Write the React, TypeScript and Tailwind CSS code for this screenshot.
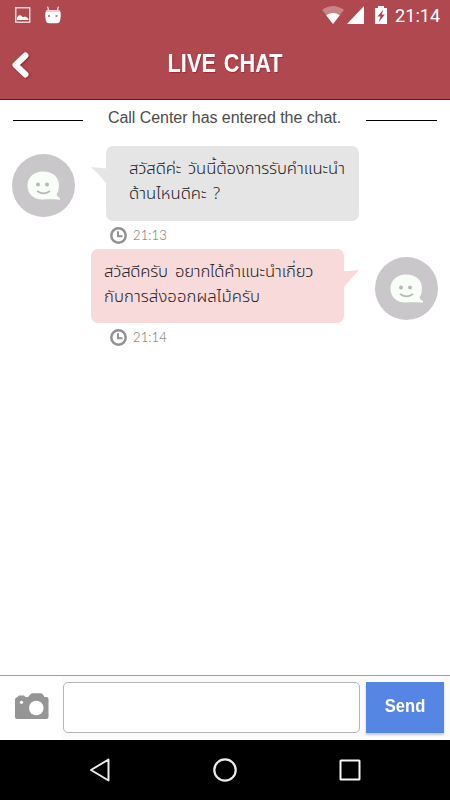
import type { ReactNode } from "react";

type Message = {
  id: number;
  side: "left" | "right";
  lines: { text: string; className: string }[];
  time: string;
};

const messages: Message[] = [
  {
    id: 1,
    side: "left",
    lines: [
      { text: "สวัสดีค่ะ วันนี้ต้องการรับคำแนะนำ", className: "tracking-[-0.110px] [word-spacing:2.500px]" },
      { text: "ด้านไหนดีคะ ?", className: "[word-spacing:2px]" },
    ],
    time: "21:13",
  },
  {
    id: 2,
    side: "right",
    lines: [
      { text: "สวัสดีครับ อยากได้คำแนะนำเกี่ยว", className: "tracking-[-0.220px] [word-spacing:3px]" },
      { text: "กับการส่งออกผลไม้ครับ", className: "tracking-[0.080px]" },
    ],
    time: "21:14",
  },
];

function StatusBar() {
  return (
    <div className="flex h-[30px] items-center text-white">
      {/* Notifications */}
      <svg className="ml-[15px] h-4 w-4" viewBox="0 0 16 16" fill="none">
        <rect x="0.75" y="0.75" width="14" height="14.5" stroke="#f5dfe1" strokeWidth="1.4" />
        <path d="M2 13V10.5L4 8.3L6 8.5L8 10.2L10 9.4L12 10.3L13.5 12V13Z" fill="#fff" />
      </svg>
      <svg className="ml-[14px] h-[18px] w-4" viewBox="0 0 16 18">
        <path d="M3.5 4.5L2.8 1M12.5 4.5L13.2 1" stroke="#fff" strokeWidth="1.1" strokeLinecap="round" />
        <path d="M0.5 6Q1 4 3 4H13Q15 4 15.5 6Q16.2 10 15 15Q14.5 17.3 12 17.3H4Q1.500 17.3 1 15Q-0.200 10 0.5 6Z" fill="#fff" />
        <path d="M1 6Q1.500 4 3 4H13Q14.500 4 15 6Z" fill="#e9cbce" />
        <rect x="3" y="9" width="2" height="2" fill="#c77c83" />
        <rect x="10.500" y="9" width="2" height="2" fill="#c77c83" />
      </svg>

      {/* Connectivity */}
      <svg className="ml-auto h-[18px] w-[22px]" viewBox="0 0 22 18">
        <path d="M11 18L0 3.800Q11 -3.800 22 3.800Z" fill="#c98389" />
        <path d="M11 18L4.200 9.200Q11 4.800 17.800 9.200Z" fill="#fff" />
      </svg>
      <svg className="ml-[3px] h-[18px] w-[17px]" viewBox="0 0 17 18">
        <path d="M17 0V18H0Z" fill="#fff" />
      </svg>
      <svg className="ml-[11px] h-[18px] w-3" viewBox="0 0 12 18">
        <path d="M0 2H3V0H9V2H12V18H0Z" fill="#fff" />
        <path d="M8.500 3.500L2.300 10.500H5.500L3.800 16L9.900 8.500H6.700Z" fill="#b0484f" />
      </svg>
      <span className="ml-2 mr-[10px] w-[45px] whitespace-nowrap pt-0.5 font-[Roboto] text-[18.2px] leading-none">21:14</span>
    </div>
  );
}

function Header() {
  return (
    <header className="h-[100px] border-b border-[#9e0308] bg-[#b0484f]">
      <StatusBar />
      <div className="grid h-[69px] grid-cols-[1fr_auto_1fr] items-center">
        <svg className="ml-[11px] h-[28px] w-5 drop-shadow-[1px_1px_1px_rgba(120,20,30,0.6)]" viewBox="0 0 20 28" fill="none">
          <path d="M14.500 4.500L4.500 14L14.500 23.500" stroke="#fff" strokeWidth="6" strokeLinecap="round" strokeLinejoin="round" />
        </svg>
        <h1 className="origin-center scale-x-[0.870] whitespace-nowrap pb-0.5 font-['Liberation_Sans'] text-[25px] font-bold leading-none text-white [text-shadow:1px_1px_1px_#9c2a34] [word-spacing:2px]">
          LIVE CHAT
        </h1>
      </div>
    </header>
  );
}

function Avatar({ className }: { className: string }) {
  return (
    <div className={`h-[63px] w-[63px] shrink-0 rounded-full bg-[#cac7ca] ${className}`}>
      <svg className="h-full w-full" viewBox="0 0 63 63" fill="none">
        <path
          d="M31 17.500C21 17.500 15.500 24 15.500 31.500C15.500 40 21.500 45.800 31 45.500C34 45 42 45.300 48 45.700V44Q45.500 43.300 44.500 40.500Q47 37 47 31.500C47 23 41 17.500 31 17.500Z"
          fill="#f8fdf8"
        />
        <circle cx="26" cy="30.500" r="2" fill="#b9b8b9" />
        <circle cx="35" cy="30.500" r="2" fill="#b9b8b9" />
        <path d="M25.500 37.300Q31.500 41.500 37.500 37.300" stroke="#b9b8b9" strokeWidth="1.700" strokeLinecap="round" />
      </svg>
    </div>
  );
}

function Clock() {
  return (
    <svg className="h-[17px] w-[17px]" viewBox="0 0 17 17" fill="none" stroke="#929292">
      <circle cx="8.500" cy="8.500" r="7.200" strokeWidth="2.500" />
      <path d="M8 4.200V9.200H12.500" strokeWidth="2" />
    </svg>
  );
}

function Bubble({ side, children }: { side: Message["side"]; children: ReactNode }) {
  if (side === "left") {
    return (
      <div className="relative ml-[31px] h-[75px] w-[253px] rounded-[7px] bg-[#e5e5e5] pl-[23px] pt-[11px]">
        <svg className="absolute -left-[15px] top-[21px] h-[18px] w-[16px]" viewBox="0 0 16 18">
          <path d="M0 0L16 1.500V18Q12 11 0 0Z" fill="#e5e5e5" />
        </svg>
        {children}
      </div>
    );
  }

  return (
    <div className="relative h-[74px] w-[253px] rounded-[7px] bg-[#f8dadb] pl-[13px] pt-[11px]">
      <svg className="absolute -right-[15px] top-[21px] h-[18px] w-[16px]" viewBox="0 0 16 18">
        <path d="M16 0L0 1.500V18Q4 13.500 16 0Z" fill="#f8dadb" />
      </svg>
      {children}
    </div>
  );
}

function MessageRow({ message }: { message: Message }) {
  const left = message.side === "left";

  return (
    <div className={left ? "h-[103px]" : "h-[102px]"}>
      <div className={left ? "flex pl-3" : "flex pl-[91px]"}>
        {left && <Avatar className="mt-2" />}
        <Bubble side={message.side}>
          {message.lines.map((line) => (
            <p
              key={line.text}
              className={`whitespace-nowrap font-['Noto_Sans_Thai','Noto_Sans',sans-serif] text-[16.700px] font-light leading-[25px] text-[#222226] ${line.className}`}
            >
              {line.text}
            </p>
          ))}
        </Bubble>
        {!left && <Avatar className="ml-[31px] mt-2" />}
      </div>
      <div className="mt-[6px] flex h-[17px] items-center gap-[6px] pl-[110px]">
        <Clock />
        <span className="font-[Lato] text-[13px] font-light leading-none tracking-[0.100px] text-[#6b6b6b]">{message.time}</span>
      </div>
    </div>
  );
}

function Composer() {
  return (
    <div className="flex h-[65px] border-t border-[#a0a0a0] bg-[#fbfbfb]">
      <button aria-label="Attach photo" className="flex w-[62px] justify-center bg-white pt-[17px] pr-[-2px]">
        <svg className="ml-0.5 h-[27px] w-[34px]" viewBox="0 0 34 27">
          <path
            d="M2.500 4L4 2.500H9L10.500 4H13L16 0.800Q16.500 0.300 17.500 0.300H25.500Q27 0.300 27.500 1L29.500 4H31.500Q33.500 4 33.500 6V24Q33.500 26 31.500 26H2Q0 26 0 24V6.500Q0 4.500 2.500 4Z"
            fill="#959595"
          />
          <circle cx="21.300" cy="15" r="7.300" fill="#fff" />
          <circle cx="6.500" cy="9.300" r="1.600" fill="#fff" />
        </svg>
      </button>
      <input
        aria-label="Message"
        className="ml-px mt-[6px] h-[51px] w-[297px] rounded-[5px] border border-[#b5b5b5] bg-white px-3 outline-none"
      />
      <button className="ml-[6px] mt-[6px] h-[51px] w-[78px] bg-[#5686e3] pb-0.5 font-['Liberation_Sans'] text-[18px] font-bold text-white shadow-[0_2px_2px_#c8c8c8]">
        <span className="inline-block scale-x-[0.920]">Send</span>
      </button>
    </div>
  );
}

function NavigationBar() {
  return (
    <nav className="flex h-[60px] items-center justify-between bg-black px-[88px]">
      <svg className="h-6 w-6" viewBox="0 0 24 24" fill="none" stroke="#ececec" strokeWidth="2">
        <path d="M20.500 1.500V22.500L3 12Z" strokeLinejoin="round" />
      </svg>
      <svg className="h-6 w-6" viewBox="0 0 24 24" fill="none" stroke="#ececec" strokeWidth="2.200">
        <circle cx="12" cy="12" r="10.700" />
      </svg>
      <svg className="h-6 w-6" viewBox="0 0 24 24" fill="none" stroke="#f5f5f5" strokeWidth="2">
        <rect x="2.500" y="2.500" width="19" height="19" rx="0.500" />
      </svg>
    </nav>
  );
}

export default function App() {
  return (
    <div className="flex h-[800px] w-[450px] flex-col overflow-hidden bg-white">
      <Header />

      <main className="flex-1">
        <div className="flex h-[46px] items-start justify-between pl-[13px] pr-[13px]">
          <span className="mt-5 h-px w-[70px] bg-black" />
          <span className="mt-[9px] whitespace-nowrap font-['Liberation_Sans'] text-[16px] leading-[17px] tracking-[-0.050px] text-[#4c4c4c]">
            Call Center has entered the chat.
          </span>
          <span className="mt-5 h-px w-[71px] bg-black" />
        </div>
        {messages.map((message) => (
          <MessageRow key={message.id} message={message} />
        ))}
      </main>

      <Composer />
      <NavigationBar />
    </div>
  );
}
